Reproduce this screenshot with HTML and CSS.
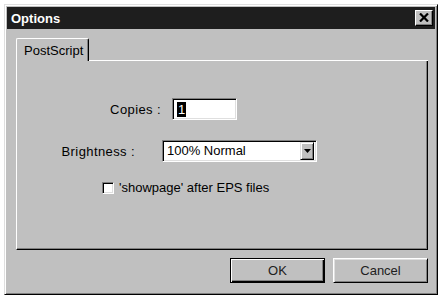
FILE: index.html
```html
<!DOCTYPE html>
<html>
<head>
<meta charset="utf-8">
<link rel="stylesheet" href="styles.css">
</head>
<body>
<div class="window">
  <div class="titlebar">
    <span class="title">Options</span>
    <span class="close"><svg width="10" height="9" viewBox="0 0 10 9"><path d="M1 0.5 L9 8.5 M9 0.5 L1 8.5" stroke="#000" stroke-width="2.2"/></svg></span>
  </div>
  <div class="content">
    <div class="tabs">
      <div class="tab">PostScript</div>
      <div class="tabline"></div>
    </div>
    <div class="panel">
      <div class="row row1">
        <label class="lbl lbl1">Copies :</label>
        <div class="field input"><span class="sel">1</span></div>
      </div>
      <div class="row row2">
        <label class="lbl lbl2">Brightness :</label>
        <div class="field combo">
          <span class="combo-text">100% Normal</span>
          <span class="arrow"><svg width="7" height="4" viewBox="0 0 7 4"><path d="M0 0 H7 L3.5 4 Z" fill="#000"/></svg></span>
        </div>
      </div>
      <div class="row row3">
        <span class="check"></span>
        <span class="check-label">'showpage' after EPS files</span>
      </div>
    </div>
    <div class="buttons">
      <div class="btn default"><span>OK</span></div>
      <div class="btn"><span>Cancel</span></div>
    </div>
  </div>
</div>
</body>
</html>
```
FILE: styles.css
```css
html, body {
  margin: 0;
  padding: 0;
  background: #ffffff;
}
body {
  font-family: "Liberation Sans", Arial, sans-serif;
  font-size: 13px;
  color: #000;
}
.window {
  margin: 4px 0 0 4px;
  width: 434px;
  height: 291px;
  box-sizing: border-box;
  background: #c0c0c0;
  border: 1px solid;
  border-color: #dfdfdf #000 #000 #dfdfdf;
  box-shadow: inset 1px 1px 0 #fff, inset -1px -1px 0 #808080;
  padding: 1px;
  display: flex;
  flex-direction: column;
}
.titlebar {
  margin: 1px 1px 0 1px;
  height: 22px;
  background: #1e1e1e;
  display: flex;
  align-items: center;
  justify-content: space-between;
  padding: 0 2px 0 4px;
}
.title {
  color: #fff;
  font-weight: bold;
  font-size: 13px;
}
.close {
  width: 18px;
  height: 16px;
  box-sizing: border-box;
  background: #c0c0c0;
  border: 1px solid;
  border-color: #fff #000 #000 #fff;
  box-shadow: inset -1px -1px 0 #808080;
  display: flex;
  align-items: center;
  justify-content: center;
  padding-bottom: 1px;
}
.content {
  flex: 1;
  display: flex;
  flex-direction: column;
  padding: 9px 8px 0 10px;
}
.tabs {
  display: flex;
  align-items: flex-end;
  height: 23px;
}
.tab {
  width: 73px;
  height: 23px;
  box-sizing: border-box;
  border-top: 1px solid #fff;
  border-left: 1px solid #fff;
  border-right: 1px solid #000;
  border-radius: 2px 2px 0 0;
  box-shadow: inset -1px 0 0 #808080;
  padding: 5px 0 0 7px;
  line-height: 14px;
}
.tabline {
  flex: 1;
  border-bottom: 1px solid #fff;
  height: 0;
}
.panel {
  height: 189px;
  box-sizing: border-box;
  border-left: 1px solid #fff;
  border-right: 1px solid #000;
  border-bottom: 1px solid #000;
  box-shadow: inset -1px -1px 0 #808080;
  display: flex;
  flex-direction: column;
  padding-top: 37px;
}
.row {
  display: flex;
  align-items: center;
}
.lbl {
  text-align: right;
  letter-spacing: 0.4px;
}
.lbl1 {
  width: 144px;
  margin-right: 11px;
}
.lbl2 {
  width: 118px;
  margin-right: 27px;
}
.field {
  height: 22px;
  box-sizing: border-box;
  background: #fff;
  border: 1px solid;
  border-color: #808080 #fff #fff #808080;
  box-shadow: inset 1px 1px 0 #000, inset -1px -1px 0 #dfdfdf;
}
.input {
  width: 65px;
  padding: 3px 0 0 4px;
}
.sel {
  display: inline-block;
  background: #000;
  color: #fff;
  line-height: 15px;
  padding: 0 1px;
}
.row2 {
  margin-top: 20px;
}
.combo {
  width: 155px;
  display: flex;
  align-items: center;
  justify-content: space-between;
  padding: 2px 2px 2px 4px;
}
.combo-text {
  line-height: 16px;
}
.arrow {
  width: 14px;
  height: 18px;
  box-sizing: border-box;
  background: #c0c0c0;
  border: 1px solid;
  border-color: #dfdfdf #000 #000 #dfdfdf;
  box-shadow: inset 1px 1px 0 #fff, inset -1px -1px 0 #808080;
  display: flex;
  align-items: center;
  justify-content: center;
}
.row3 {
  margin-top: 19px;
  margin-left: 85px;
}
.check {
  width: 12px;
  height: 12px;
  box-sizing: border-box;
  background: #fff;
  border: 1px solid;
  border-color: #808080 #fff #fff #808080;
  box-shadow: inset 1px 1px 0 #000, inset -1px -1px 0 #dfdfdf;
  margin-right: 5px;
}
.check-label {
  line-height: 14px;
}
.buttons {
  display: flex;
  justify-content: flex-end;
  gap: 8px;
  margin-top: 8px;
}
.btn {
  width: 95px;
  height: 25px;
  box-sizing: border-box;
  border: 1px solid;
  border-color: #fff #000 #000 #fff;
  box-shadow: inset 1px 1px 0 #dfdfdf, inset -1px -1px 0 #808080;
  display: flex;
  align-items: center;
  justify-content: center;
  color: #202020;
}
.btn.default {
  border: 1px solid #000;
  box-shadow: inset 1px 1px 0 #fff, inset -1px -1px 0 #000, inset -2px -2px 0 #808080;
}
```
